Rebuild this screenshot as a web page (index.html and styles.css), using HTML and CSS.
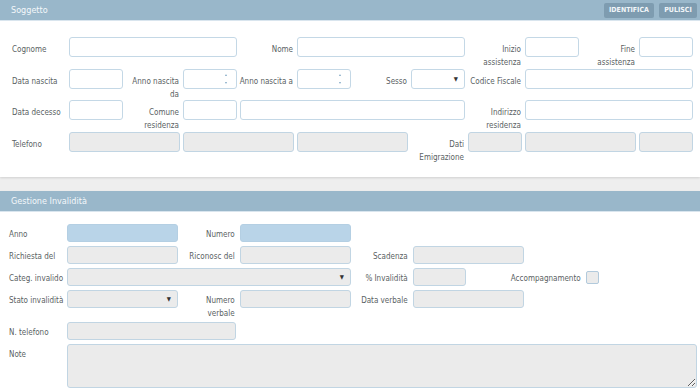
FILE: index.html
```html
<!DOCTYPE html>
<html lang="it">
<head>
<meta charset="utf-8">
<title>Soggetto</title>
<link rel="stylesheet" href="styles.css">
</head>
<body>
<section class="panel panel-soggetto">
  <header class="panel-head">
    <span class="panel-title">Soggetto</span>
    <div class="head-actions">
      <button class="btn">IDENTIFICA</button>
      <button class="btn">PULISCI</button>
    </div>
  </header>
  <div class="grid grid-a">
    <label class="lbl first">Cognome</label>
    <input class="inp c2-4" type="text">
    <label class="lbl">Nome</label>
    <input class="inp c6-8" type="text">
    <label class="lbl">Inizio<br>assistenza</label>
    <input class="inp" type="text">
    <label class="lbl">Fine<br>assistenza</label>
    <input class="inp" type="text">

    <label class="lbl first">Data nascita</label>
    <input class="inp" type="text">
    <label class="lbl">Anno nascita<br>da</label>
    <div class="inp spin"><span class="arr up"></span><span class="arr down"></span></div>
    <label class="lbl">Anno nascita a</label>
    <div class="inp spin"><span class="arr up"></span><span class="arr down"></span></div>
    <label class="lbl">Sesso</label>
    <div class="inp sel"><span class="caret">▼</span></div>
    <label class="lbl">Codice Fiscale</label>
    <input class="inp c10-12" type="text">

    <label class="lbl first">Data decesso</label>
    <input class="inp" type="text">
    <label class="lbl">Comune<br>residenza</label>
    <input class="inp" type="text">
    <input class="inp c5-8" type="text">
    <label class="lbl">Indirizzo<br>residenza</label>
    <input class="inp c10-12" type="text">

    <label class="lbl first">Telefono</label>
    <input class="inp dis c2-3" type="text" disabled>
    <input class="inp dis c4-5" type="text" disabled>
    <input class="inp dis c6-7" type="text" disabled>
    <label class="lbl">Dati<br>Emigrazione</label>
    <input class="inp dis" type="text" disabled>
    <input class="inp dis c10-11" type="text" disabled>
    <input class="inp dis" type="text" disabled>
  </div>
</section>

<section class="panel panel-invalid">
  <header class="panel-head">
    <span class="panel-title">Gestione Invalidità</span>
  </header>
  <div class="grid grid-b">
    <label class="lbl first">Anno</label>
    <input class="inp key c2-3" type="text">
    <label class="lbl">Numero</label>
    <input class="inp key c5-6" type="text">

    <label class="lbl first r2">Richiesta del</label>
    <input class="inp dis c2-3" type="text" disabled>
    <label class="lbl">Riconosc del</label>
    <input class="inp dis c5-6" type="text" disabled>
    <label class="lbl">Scadenza</label>
    <input class="inp dis c8-9" type="text" disabled>

    <label class="lbl first">Categ. invalido</label>
    <div class="inp dis sel c2-6"><span class="caret">▼</span></div>
    <label class="lbl">% Invalidità</label>
    <input class="inp dis" type="text" disabled>
    <label class="lbl c9-10">Accompagnamento</label>
    <div class="chk-cell"><span class="chk"></span></div>

    <label class="lbl first">Stato invalidità</label>
    <div class="inp dis sel c2-3"><span class="caret">▼</span></div>
    <label class="lbl">Numero<br>verbale</label>
    <input class="inp dis c5-6" type="text" disabled>
    <label class="lbl">Data verbale</label>
    <input class="inp dis c8-9" type="text" disabled>

    <label class="lbl first">N. telefono</label>
    <input class="inp dis c2-4" type="text" disabled>

    <label class="lbl first">Note</label>
    <textarea class="inp dis note c2-12" disabled></textarea>
  </div>
</section>
</body>
</html>
```

FILE: styles.css
```css
* { box-sizing: border-box; }

html, body {
  margin: 0;
  padding: 0;
}

body {
  width: 700px;
  height: 390px;
  overflow: hidden;
  background: #eeeeee;
  font-family: "DejaVu Sans Condensed", "Liberation Sans Narrow", "Liberation Sans", sans-serif;
  font-size: 8px;
  color: #5a5f63;
}

.panel {
  background: #ffffff;
  box-shadow: 0 1px 2px rgba(0, 0, 0, 0.12);
}

.panel-invalid {
  margin-top: 14px;
}

.panel-head {
  height: 21px;
  background: #99b7ca;
  display: flex;
  align-items: center;
  justify-content: space-between;
  padding: 0 3px 0 11px;
  border-bottom: 1px solid #d9e5ee;
}

.panel-title {
  color: #f4f8fb;
  font-size: 9px;
}

.head-actions {
  display: flex;
  gap: 5px;
}

.btn {
  height: 15px;
  border: 0;
  border-radius: 2px;
  background: #7e9cb0;
  color: #f2f6f9;
  font-family: "DejaVu Sans Condensed", "Liberation Sans", sans-serif;
  font-size: 7px;
  font-weight: bold;
  padding: 0 4px;
  line-height: 15px;
}

.btn:first-child { width: 50px; }
.btn:last-child { width: 38px; }

.grid {
  display: grid;
  grid-template-columns: repeat(12, minmax(0, 1fr));
}

.grid-a {
  padding: 16px 7px 25px 12px;
  column-gap: 3px;
  grid-auto-rows: 20px;
  row-gap: 11.7px;
}

.grid-b {
  padding: 12px 3px 2px 9px;
  column-gap: 4px;
  row-gap: 4px;
  grid-template-rows: 18px 18px 18px 28px 18px 44px;
}

.lbl {
  text-align: right;
  white-space: nowrap;
  line-height: 13px;
  padding-top: 6px;
  padding-right: 1px;
  overflow: visible;
}

.grid-a .lbl:not(.first) {
  display: flex;
  flex-direction: column;
  align-items: flex-end;
}

.grid-b .lbl {
  line-height: 12.5px;
  padding-top: 5px;
}

.lbl.first {
  text-align: left;
}

.inp {
  display: block;
  width: 100%;
  height: 100%;
  margin: 0;
  border: 1px solid #c4d8e6;
  border-radius: 3px;
  background: #ffffff;
  font: inherit;
  outline: none;
  position: relative;
}

.grid-b .inp { height: 18px; }

.inp.dis {
  background: #ebebeb;
  border-color: #c1d5e3;
}

.inp.key {
  background: #b9d4e8;
  border-color: #b4cfe3;
}

.grid-b .note {
  height: 44px;
  resize: both;
}

.sel .caret {
  position: absolute;
  right: 6px;
  top: 50%;
  transform: translateY(-50%);
  font-size: 6px;
  color: #333;
  line-height: 1;
}

.spin .arr {
  position: absolute;
  right: 9px;
  width: 0;
  height: 0;
  border-left: 1.5px solid transparent;
  border-right: 1.5px solid transparent;
}

.spin .arr.up {
  top: 4px;
  border-bottom: 2px solid #7fa6c4;
}

.spin .arr.down {
  bottom: 4px;
  border-top: 2px solid #7fa6c4;
}

.chk-cell {
  display: flex;
  align-items: center;
}

.chk {
  width: 13px;
  height: 13px;
  border: 1px solid #b2cadc;
  border-radius: 2px;
  background: #ebebeb;
}

.c2-3 { grid-column: 2 / 4; }
.c2-4 { grid-column: 2 / 5; }
.c2-6 { grid-column: 2 / 7; }
.c2-12 { grid-column: 2 / 13; }
.c4-5 { grid-column: 4 / 6; }
.c5-6 { grid-column: 5 / 7; }
.c5-8 { grid-column: 5 / 9; }
.c6-7 { grid-column: 6 / 8; }
.c6-8 { grid-column: 6 / 9; }
.c8-9 { grid-column: 8 / 10; }
.c9-10 { grid-column: 9 / 11; }
.c10-11 { grid-column: 10 / 12; }
.c10-12 { grid-column: 10 / 13; }

.grid-b .r2,
.grid-b .lbl.first { grid-column: 1 / 2; }
```
